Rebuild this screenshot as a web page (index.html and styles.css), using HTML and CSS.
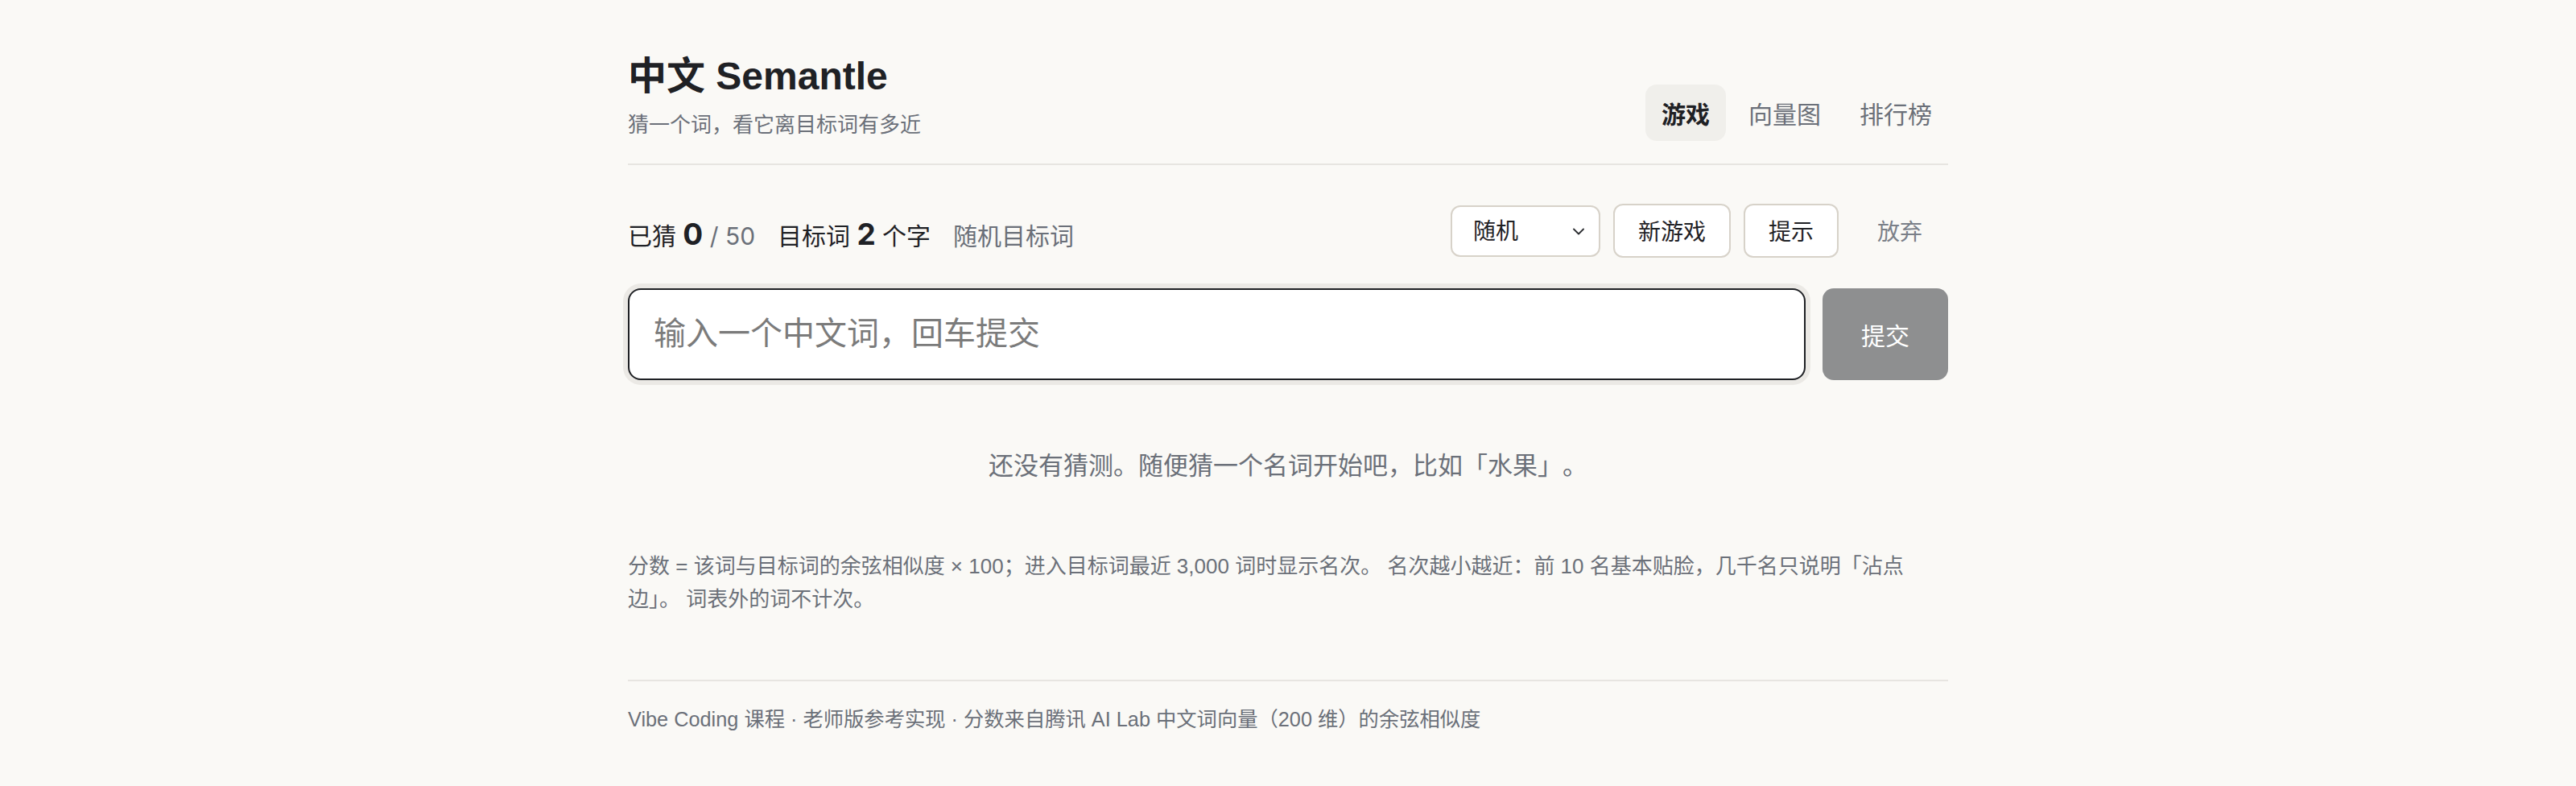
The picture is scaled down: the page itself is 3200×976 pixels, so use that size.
FILE: index.html
```html
<!DOCTYPE html>
<html lang="zh-CN">
<head>
<meta charset="utf-8">
<title>中文 Semantle</title>
<link rel="stylesheet" href="styles.css">
</head>
<body>
<div class="page">
  <header class="header">
    <div class="brand">
      <h1 class="title">中文 Semantle</h1>
      <p class="subtitle">猜一个词，看它离目标词有多近</p>
    </div>
    <nav class="nav">
      <a class="nav-item active">游戏</a>
      <a class="nav-item">向量图</a>
      <a class="nav-item">排行榜</a>
    </nav>
  </header>

  <section class="status">
    <div class="stats">
      <span class="stat">已猜 <b class="num">0</b> <span class="muted digits">/ 50</span></span>
      <span class="stat">目标词 <b class="num">2</b> 个字</span>
      <span class="stat muted">随机目标词</span>
    </div>
    <div class="controls">
      <div class="select-wrap">
        <select class="select">
          <option>随机</option>
        </select>
        <svg class="chevron" width="14" height="9" viewBox="0 0 14 9"><path d="M1 1.5l6 6 6-6" fill="none" stroke="#2a2c30" stroke-width="1.8" stroke-linecap="round" stroke-linejoin="round"/></svg>
      </div>
      <button class="btn">新游戏</button>
      <button class="btn">提示</button>
      <button class="btn btn-ghost">放弃</button>
    </div>
  </section>

  <form class="guess">
    <input class="guess-input" type="text" placeholder="输入一个中文词，回车提交">
    <button class="submit" type="button">提交</button>
  </form>

  <p class="empty">还没有猜测。随便猜一个名词开始吧，比如「水果」。</p>

  <p class="note">分数 = 该词与目标词的余弦相似度 × 100；进入目标词最近 3,000 词时显示名次。 名次越小越近：前 10 名基本贴脸，几千名只说明「沾点边」。 词表外的词不计次。</p>

  <footer class="footer">Vibe Coding 课程 · 老师版参考实现 · 分数来自腾讯 AI Lab 中文词向量（200 维）的余弦相似度</footer>
</div>
</body>
</html>
```

FILE: styles.css
```css
html, body {
  margin: 0;
  padding: 0;
}

body {
  background: #faf9f6;
  color: #1f2125;
  font-family: "Liberation Sans", "Noto Sans CJK SC", sans-serif;
}

.page {
  width: 1640px;
  margin: 0 auto;
  padding-top: 66px;
}

.header {
  display: flex;
  justify-content: space-between;
  align-items: flex-end;
  padding-bottom: 28px;
  border-bottom: 2px solid #e7e5e1;
}

.title {
  margin: 0;
  font-size: 48px;
  line-height: 1.2;
  font-weight: 700;
  color: #1f2125;
}

.subtitle {
  margin: 12px 0 0;
  font-size: 26px;
  line-height: 39px;
  color: #6b7079;
}

.nav {
  display: flex;
  gap: 8px;
}

.nav-item {
  display: flex;
  align-items: center;
  height: 70px;
  padding: 0 20px;
  border-radius: 14px;
  font-size: 30px;
  color: #6b7079;
}

.nav-item.active {
  background: #f0efeb;
  color: #1f2125;
  font-weight: 700;
}

.status {
  display: flex;
  justify-content: space-between;
  align-items: center;
  margin-top: 48px;
}

.stats {
  display: flex;
  align-items: baseline;
  gap: 28px;
  font-size: 30px;
  padding-top: 8px;
}

.num {
  font-family: "Inter", "Liberation Sans", sans-serif;
  font-size: 37px;
  font-weight: 700;
}

.digits {
  font-family: "Inter", "Liberation Sans", sans-serif;
}

.muted {
  color: #6b7079;
}

.controls {
  display: flex;
  align-items: center;
  gap: 16px;
}

.select-wrap {
  position: relative;
  width: 186px;
  height: 64px;
  margin-top: 2px;
}

.select {
  appearance: none;
  -webkit-appearance: none;
  width: 100%;
  height: 100%;
  box-sizing: border-box;
  padding: 0 26px;
  border: 2px solid #d7d2c9;
  border-radius: 12px;
  background: #ffffff;
  font-family: inherit;
  font-size: 28px;
  color: #1f2125;
}

.chevron {
  position: absolute;
  right: 20px;
  top: 28px;
}

.btn {
  height: 67px;
  padding: 0 29px;
  border: 2px solid #d7d2c9;
  border-radius: 12px;
  background: #ffffff;
  font-family: inherit;
  font-size: 28px;
  color: #1f2125;
}

.btn-ghost {
  border-color: transparent;
  background: transparent;
  color: #7a7f88;
  padding: 0 30px;
}

.guess {
  display: flex;
  gap: 21px;
  margin: 38px 0 0;
}

.guess-input {
  flex: 1;
  height: 114px;
  box-sizing: border-box;
  padding: 0 30px;
  border: 2px solid #1f2125;
  border-radius: 16px;
  background: #ffffff;
  box-shadow: 0 0 0 6px #ebe9e5;
  font-family: inherit;
  font-size: 40px;
  color: #1f2125;
  outline: none;
}

.guess-input::placeholder {
  color: #7b7b7b;
}

.submit {
  width: 156px;
  height: 114px;
  border: none;
  border-radius: 14px;
  background: #8e8f90;
  color: #ffffff;
  font-family: inherit;
  font-size: 30px;
}

.empty {
  margin: 0;
  padding: 84px 0 82px;
  text-align: center;
  font-size: 31px;
  line-height: 45px;
  color: #6b7079;
  text-spacing-trim: space-all;
}

.note {
  margin: 0;
  font-size: 26px;
  line-height: 41.5px;
  color: #6b7079;
}

.footer {
  margin-top: 78px;
  padding: 28px 0 40px;
  border-top: 2px solid #e7e5e1;
  font-size: 25.3px;
  line-height: 39px;
  color: #6b7079;
}
```
